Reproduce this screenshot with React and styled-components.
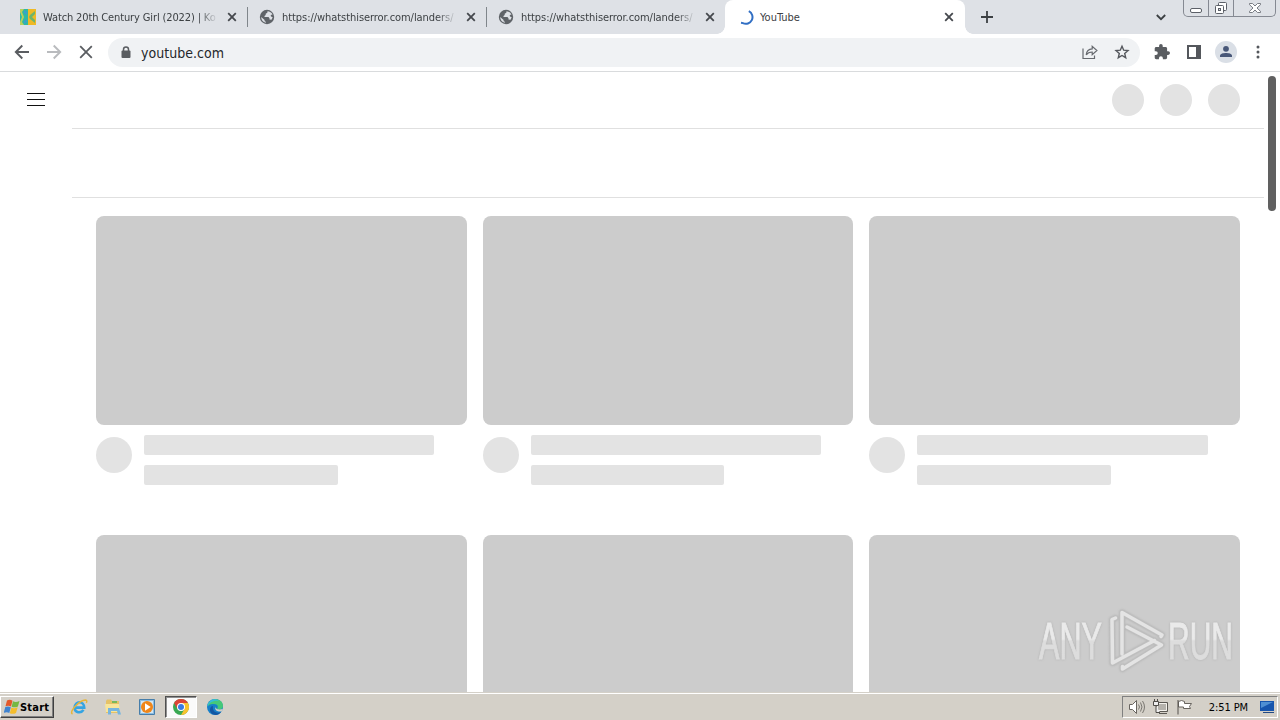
import React from "react"
import styled, { createGlobalStyle } from "styled-components"

const GlobalStyle = createGlobalStyle`
* { box-sizing: border-box; }
body {
    margin: 0;
    overflow: hidden;
    background: white;
}
svg { display: block; flex: none; }
`

const tabs = [
    { title: "Watch 20th Century Girl (2022) | Ko", icon: "site", width: 248, pad: 20, spacing: -0.13 },
    { title: "https://whatsthiserror.com/landers/", icon: "globe", width: 239, pad: 11, spacing: -0.06 },
    { title: "https://whatsthiserror.com/landers/", icon: "globe", width: 238, pad: 11, spacing: -0.06 },
]

function SiteIcon() {
    return (
        <svg width="16" height="16" viewBox="0 0 16 16">
            <path fill="#2eb8a4" d="M0 0h8v16H0z" />
            <path fill="#efb925" d="M8 0h8v16H8z" />
            <path fill="#b9cf5a" d="M0 0h4L2 3l2 5-2 5 2 3H0v-3l2-5-2-5z" />
            <path fill="#6eb56b" d="M15 2v3l-3 3 3 3v3l-5-4-1-2 1-2z" />
            <path fill="#3c9fcb" d="M4 1l3 2v3L4 4zM4 15l3-2v-3l-3 2z" />
        </svg>
    )
}

function GlobeIcon() {
    return (
        <svg width="16" height="16" viewBox="0 0 16 16">
            <circle cx="8" cy="8" r="7.2" fill="#5f6368" />
            <path fill="#dee1e6" d="M8.5 2.2l-.2 1.5-1.6 1v1.4L5.5 7v1h4l1 1.2v1.3l2 .2 1.2-2.4-1.7-.7-.3-1.5 1.8-.7a6 6 0 0 0-5-3.2zM2.2 8l3.4 3v1.2l1.3.5v1.1A6 6 0 0 1 2.2 8z" />
        </svg>
    )
}

function CloseIcon() {
    return (
        <svg width="10" height="10" viewBox="0 0 10 10">
            <path d="M1.2 1.2l7.6 7.6M8.8 1.2L1.2 8.8" stroke="#45484d" strokeWidth="1.8" />
        </svg>
    )
}

function Tab({ tab }) {
    return (
        <TabDiv $width={tab.width} $pad={tab.pad}>
            {tab.icon === "site" ? <SiteIcon /> : <GlobeIcon />}
            <TabTitle $spacing={tab.spacing}>{tab.title}</TabTitle>
            <CloseIcon />
        </TabDiv>
    )
}

function TabStrip() {
    return (
        <StripDiv>
            {tabs.map((tab, i) => <Tab key={i} tab={tab} />)}
            <ActiveTab>
                <svg width="16" height="16" viewBox="0 0 16 16">
                    <path d="M9.8 2.2a6 6 0 0 1-5.9 11.9L2 13.8" fill="none" stroke="#316fc4" strokeWidth="2" />
                </svg>
                <ActiveTitle>YouTube</ActiveTitle>
                <CloseIcon />
            </ActiveTab>
            <NewTab>
                <svg width="12" height="12" viewBox="0 0 12 12">
                    <path d="M6 0v12M0 6h12" stroke="#3c4043" strokeWidth="1.8" />
                </svg>
            </NewTab>
            <svg width="10" height="7" viewBox="0 0 10 7">
                <path d="M.8 1l4.2 4.2L9.2 1" fill="none" stroke="#3c4043" strokeWidth="1.8" />
            </svg>
            <WindowButtons>
                <WindowButton $width={25}>
                    <svg width="12" height="16" viewBox="0 0 12 16">
                        <rect x=".5" y="8.5" width="11" height="4" rx="1.5" fill="#fff" stroke="#5c6068" />
                    </svg>
                </WindowButton>
                <WindowButton $width={25}>
                    <svg width="14" height="16" viewBox="0 0 14 16">
                        <rect x="4.5" y="2.5" width="8" height="8" rx="1" fill="#fff" stroke="#5c6068" />
                        <rect x="1.5" y="5.5" width="8" height="8" rx="1" fill="#fff" stroke="#5c6068" />
                        <rect x="4.5" y="8.5" width="2" height="2" fill="#dee1e6" stroke="#5c6068" />
                    </svg>
                </WindowButton>
                <WindowButton $width={41}>
                    <svg width="12" height="16" viewBox="0 0 12 16">
                        <path d="M.5 3.5h3L6 6l2.5-2.5h3v1.2L8 8l3.5 3.3v1.2h-3L6 10l-2.5 2.5h-3v-1.2L4 8 .5 4.7z" fill="#fff" stroke="#6b6f77" strokeWidth=".9" />
                    </svg>
                </WindowButton>
            </WindowButtons>
        </StripDiv>
    )
}

function Toolbar() {
    return (
        <ToolbarDiv>
            <NavIcons>
                <svg width="16" height="16" viewBox="0 0 16 16">
                    <path d="M15 8H2M8.3 1.5L1.8 8l6.5 6.5" fill="none" stroke="#5a5d61" strokeWidth="1.9" />
                </svg>
                <svg width="16" height="16" viewBox="0 0 16 16">
                    <path d="M1 8h13M7.7 1.5L14.2 8l-6.5 6.5" fill="none" stroke="#b9bbbe" strokeWidth="1.9" />
                </svg>
                <svg width="16" height="16" viewBox="0 0 16 16">
                    <path d="M2.2 2.2l11.6 11.6M13.8 2.2L2.2 13.8" stroke="#5a5d61" strokeWidth="1.8" />
                </svg>
            </NavIcons>
            <AddressBar>
                <svg width="10" height="13" viewBox="0 0 10 13">
                    <path d="M2.5 5V3.4a2.5 2.5 0 0 1 5 0V5" fill="none" stroke="#5a5d61" strokeWidth="1.5" />
                    <rect x=".5" y="4.5" width="9" height="7.5" rx="1" fill="#5a5d61" />
                </svg>
                <Url>youtube.com</Url>
                <svg width="16" height="16" viewBox="0 0 16 16">
                    <path d="M1 4.5v10h11.5v-3M4.2 10.8c.4-3.7 2.3-5.7 6-5.9V2.4l4.7 4.1-4.7 4.1V8c-2.7 0-4.6.8-6 2.8z" fill="none" stroke="#66696e" strokeWidth="1.2" />
                </svg>
                <svg width="16" height="16" viewBox="0 0 16 16">
                    <path d="M8 2.2l1.7 4 4.3.4-3.3 2.9 1 4.2L8 11.5l-3.7 2.2 1-4.2L2 6.6l4.3-.4z" fill="none" stroke="#54575c" strokeWidth="1.4" />
                </svg>
            </AddressBar>
            <ToolIcons>
                <svg width="16" height="16" viewBox="1 1 22 22">
                    <path fill="#5a5d61" d="M20.5 11H19V7c0-1.1-.9-2-2-2h-4V3.5a2.5 2.5 0 0 0-5 0V5H4c-1.1 0-2 .9-2 2v3.8h1.5a2.7 2.7 0 0 1 0 5.4H2V20c0 1.1.9 2 2 2h3.8v-1.5a2.7 2.7 0 0 1 5.4 0V22H17c1.1 0 2-.9 2-2v-4h1.5a2.5 2.5 0 0 0 0-5z" />
                </svg>
                <svg width="16" height="16" viewBox="0 0 16 16">
                    <path fill="#54575c" d="M1 1h14v14H1z" />
                    <path fill="#fff" d="M3 3h7v10H3z" />
                </svg>
                <Avatar>
                    <svg width="14" height="14" viewBox="0 0 14 14">
                        <circle cx="7" cy="3.8" r="2.9" fill="#485778" />
                        <path d="M1 12v-1.2C1 8.7 4.5 8 7 8s6 .7 6 2.8V12z" fill="#485778" />
                    </svg>
                </Avatar>
                <svg width="4" height="14" viewBox="0 0 4 14">
                    <g fill="#54575c">
                        <circle cx="2" cy="2" r="1.5" />
                        <circle cx="2" cy="7" r="1.5" />
                        <circle cx="2" cy="12" r="1.5" />
                    </g>
                </svg>
            </ToolIcons>
        </ToolbarDiv>
    )
}

function VideoCard() {
    return (
        <div>
            <Thumbnail />
            <Details>
                <Channel />
                <Lines>
                    <Line $width="78.3%" />
                    <Line $width="52.23%" />
                </Lines>
            </Details>
        </div>
    )
}

function Watermark() {
    return (
        <WatermarkDiv>
            <svg width="206" height="70" viewBox="1036 606 206 70">
                <defs>
                    <linearGradient id="fade" gradientUnits="userSpaceOnUse" x1="0" x2="0" y1="622" y2="660">
                        <stop offset=".45" stopColor="#eaeaea" />
                        <stop offset=".5" stopColor="#dddddd" />
                    </linearGradient>
                </defs>
                <g fill="url(#fade)" stroke="url(#fade)" strokeWidth="1" fontFamily="Liberation Sans Narrow, Liberation Sans, sans-serif" fontSize="51">
                    <text x="1039" y="659" textLength="63" lengthAdjust="spacingAndGlyphs">ANY</text>
                    <text x="1168" y="659" textLength="65" lengthAdjust="spacingAndGlyphs">RUN</text>
                </g>
                <g fill="none" strokeLinecap="round" strokeLinejoin="round">
                    <path stroke="#bfbfbf" strokeWidth="5.5" d="M1122 654v-41.500l40 22.500-1 1.500M1127 627l34.500 18-39 24v-2.500M1115.500 618l-3.500 1.500.5 43.500 42-22.500" />
                    <path stroke="#e4e4e4" strokeWidth="3.5" d="M1122 654v-41.500l40 22.500-1 1.500M1127 627l34.500 18-39 24v-2.500M1115.500 618l-3.500 1.500.5 43.500 42-22.500" />
                </g>
            </svg>
        </WatermarkDiv>
    )
}

function YouTubePage() {
    return (
        <PageDiv>
            <MenuColumn>
                <svg width="18" height="14" viewBox="0 0 18 14">
                    <path d="M0 .5h18M0 6.5h18M0 12.5h18" stroke="#111" />
                </svg>
            </MenuColumn>
            <Content>
                <Masthead>
                    <Circle />
                    <Circle />
                    <Circle />
                </Masthead>
                <ChipBar />
                <VideoGrid>
                    {[1, 2, 3, 4, 5, 6].map(n => <VideoCard key={n} />)}
                </VideoGrid>
            </Content>
            <ScrollTrack>
                <ScrollThumb />
            </ScrollTrack>
            <Watermark />
        </PageDiv>
    )
}

function Taskbar() {
    return (
        <TaskbarDiv>
            <StartButton>
                <svg width="16" height="16" viewBox="0 0 16 16">
                    <path fill="#e3592b" d="M3 1.5c2-1 3.800-.8 5.500.3L7 7.500C5 6.500 3.500 6.500 1.500 7.300z" />
                    <path fill="#75b843" d="M9 2.300c2 1 4 .8 6.500-.3l-1.600 5.500c-2 1-4.100 1.200-6.300.2z" />
                    <path fill="#3f83d0" d="M1.300 8c2-.9 3.700-.8 5.500.2L5.300 14c-1.500-1-3.300-1.100-5.600-.2z" />
                    <path fill="#f4bd2c" d="M7.400 8.500c2 1 4 .8 6.300-.3L12 14c-2 1-4 1.200-6.200.2z" />
                </svg>
                Start
            </StartButton>
            <QuickIcon>
                <svg width="18" height="18" viewBox="0 0 18 18">
                    <path d="M4.8 9.600h9.400C14 2.500 5 2.500 4.600 9.600c0 5.500 6.500 6 8.900 2.300" fill="none" stroke="#35a4e2" strokeWidth="2.6" />
                    <path d="M2.500 16C-1.500 14 9 2.500 15.500 2c1.800 0 1.500 1.600.8 2.900" fill="none" stroke="#e7b538" strokeWidth="1.4" />
                </svg>
            </QuickIcon>
            <QuickIcon>
                <svg width="18" height="18" viewBox="0 0 18 18">
                    <path fill="#e5c267" d="M2 3l1-1.500h4l1 1.500h7v12H2z" />
                    <path fill="#79b95b" d="M8 3h5v2H8z" />
                    <path fill="#f8e59a" d="M1 6h14l1 8H2z" />
                    <path fill="#77b5df" d="M4 10h11l2 6.500h-3L13 13H7v3.500H4z" />
                </svg>
            </QuickIcon>
            <QuickIcon>
                <svg width="18" height="18" viewBox="0 0 18 18">
                    <path fill="#8bbde2" stroke="#477eaa" d="M1.500 1.500h15v15h-15z" />
                    <path fill="#d5e7f2" d="M3 3h12v12H3z" />
                    <circle cx="9" cy="9" r="6" fill="#ef8619" />
                    <path fill="#fff" d="M7 5.300L12.700 9 7 12.700z" />
                </svg>
            </QuickIcon>
            <QuickIcon $pressed>
                <svg width="16" height="16" viewBox="0 0 16 16">
                    <circle cx="8" cy="8" r="8" fill="#39a852" />
                    <path fill="#dc4437" d="M1.070 4A8 8 0 0 1 14.930 4H8v4l-3.500 2z" />
                    <path fill="#f9c22d" d="M14.930 4A8 8 0 0 1 8 16l3.500-6L8 4z" />
                    <circle cx="8" cy="8" r="4" fill="#fff" />
                    <circle cx="8" cy="8" r="3" fill="#397be4" />
                </svg>
            </QuickIcon>
            <QuickIcon>
                <svg width="16" height="16" viewBox="0 0 16 16">
                    <circle cx="8" cy="8" r="8" fill="#167fc9" />
                    <path fill="#45c879" d="M1 5C4-2 16-1 16 7c0 3-3 4-6 3 2-3 0-5-3-5-2 0-4 0-6 2z" />
                    <path fill="#33bddc" d="M.5 6C3-.5 9-1 12 2 7 1 2 3 .5 8z" />
                    <path fill="#1356a2" d="M6 7c-1 5 3 8 8 6-3 5-11 3-11-2 0-2 1-4 3-4z" />
                    <path fill="#d4d0c8" d="M9 7c-1.500 2 1 4.500 7 3l-1.500 2.500c-4 .5-8-1.500-5.500-5.500z" />
                </svg>
            </QuickIcon>
            <Tray>
                <svg width="18" height="16" viewBox="0 0 18 16">
                    <path d="M1.500 5.500h3l4-4v13l-4-4h-3z" fill="#fff" stroke="#68645f" />
                    <path d="M10.500 5.500q2 2.500 0 5M12.500 3.500q3 4.500 0 9M14.500 2q4 6 0 12" fill="none" stroke="#7a7771" />
                </svg>
                <svg width="18" height="16" viewBox="0 0 18 16">
                    <path d="M4.500 3.500h11v9h-11zM7 14.500h8" fill="#b5b2ac" stroke="#5b5853" />
                    <path d="M5.500 4.500h9v7h-9z" fill="none" stroke="#f4f2ed" />
                    <path d="M1.500 2.500h5v4h-5zM2.500 0v2M5.500 0v2M4 6.500v7h4" fill="#eee" stroke="#4f4c48" />
                </svg>
                <svg width="18" height="16" viewBox="0 0 18 16">
                    <path d="M2.500 2.500q3-2 6 0v2h7l-2 3 1 2h-7v-1.500h-5z" fill="#fff" stroke="#68645f" />
                    <path d="M2 1v14.500" stroke="#55514c" />
                </svg>
                <Clock>2:51 PM</Clock>
                <svg width="16" height="16" viewBox="0 0 16 16">
                    <path fill="#1755ad" d="M1 2h14v10H1z" />
                    <path fill="#4f8fd3" d="M2 3h12L2 9z" />
                    <path fill="#224983" d="M4 13h11v1H4z" />
                </svg>
            </Tray>
        </TaskbarDiv>
    )
}

function App() {
    return (
        <ScreenDiv>
            <GlobalStyle />
            <TabStrip />
            <Toolbar />
            <YouTubePage />
            <Taskbar />
        </ScreenDiv>
    )
}
export default App

const ScreenDiv = styled.div`
width: 1280px;
height: 720px;
display: flex;
flex-direction: column;
overflow: hidden;
font-family: "DejaVu Sans Condensed", "DejaVu Sans", sans-serif;
font-stretch: condensed;
`
const StripDiv = styled.div`
height: 34px;
flex: none;
display: flex;
align-items: center;
background: #dee1e6;
`
const TabDiv = styled.div`
width: ${props => props.$width}px;
height: 34px;
display: flex;
align-items: center;
padding: 0 11px 0 ${props => props.$pad}px;
background: linear-gradient(#80868b, #80868b) right 0 center / 1px 20px no-repeat;
&:nth-child(3) {
    background: none;
    padding-right: 10px;
}
`
const TabTitle = styled.span`
flex: 1;
margin: 1px 9px 0 7px;
white-space: nowrap;
font-size: 11px;
line-height: 16px;
letter-spacing: ${props => props.$spacing}px;
color: #3c4043;
mask-image: linear-gradient(to left, transparent, black 20px);
`
const ActiveTab = styled.div`
position: relative;
width: 240px;
height: 34px;
display: flex;
align-items: center;
padding: 0 11px 0 14px;
border-radius: 8px 8px 0 0;
background: white;
&::before, &::after {
    content: "";
    position: absolute;
    bottom: 0;
    left: -8px;
    width: 8px;
    height: 8px;
    background: radial-gradient(circle at 0 0, transparent 7.5px, white 8px);
}
&::after {
    left: 100%;
    background: radial-gradient(circle at 100% 0, transparent 7.5px, white 8px);
}
`
const ActiveTitle = styled.span`
flex: 1;
margin: 1px 0 0 5px;
font-size: 11px;
line-height: 16px;
color: #3c4043;
`
const NewTab = styled.div`
flex: 1;
padding-left: 16px;
`
const WindowButtons = styled.div`
display: flex;
align-self: flex-start;
height: 17px;
margin: 0 4px 0 17px;
border: 1px solid #858992;
border-top: 0;
border-radius: 0 0 5px 5px;
`
const WindowButton = styled.div`
width: ${props => props.$width}px;
display: flex;
justify-content: center;
border-right: 1px solid #858992;
&:last-child { border-right: 0; }
`
const ToolbarDiv = styled.div`
height: 38px;
flex: none;
display: flex;
align-items: center;
border-bottom: 1px solid #d9dbdd;
background: white;
`
const NavIcons = styled.div`
display: flex;
gap: 16px;
padding: 0 0 2px 14px;
width: 108px;
`
const AddressBar = styled.div`
width: 1032px;
height: 29px;
display: flex;
align-items: center;
gap: 16px;
padding: 0 10px 1px 13px;
border-radius: 15px;
background: #f0f2f4;
`
const Url = styled.span`
flex: 1;
margin: 1px 0 0 -6px;
font-size: 14px;
line-height: 20px;
letter-spacing: 0.03px;
color: #24272b;
`
const ToolIcons = styled.div`
display: flex;
align-items: center;
padding: 0 0 2px 14px;
gap: 16px;
`
const Avatar = styled.div`
width: 22px;
height: 22px;
margin: 0 3px 0 -3px;
display: flex;
align-items: center;
justify-content: center;
border-radius: 50%;
background: #dadfe6;
`
const PageDiv = styled.div`
position: relative;
height: 620px;
flex: none;
display: flex;
overflow: hidden;
`
const MenuColumn = styled.div`
width: 72px;
padding: 21px 27px;
`
const Content = styled.div`
width: 1192px;
`
const Masthead = styled.div`
height: 57px;
display: flex;
justify-content: flex-end;
gap: 16px;
padding: 12px 24px;
border-bottom: 1px solid #e0e0e0;
`
const Circle = styled.div`
width: 32px;
height: 32px;
border-radius: 50%;
background: #e3e3e3;
`
const ChipBar = styled.div`
height: 69px;
border-bottom: 1px solid #e0e0e0;
`
const VideoGrid = styled.div`
display: grid;
grid-template-columns: repeat(3, 1fr);
grid-auto-rows: 319px;
column-gap: 16px;
padding: 18px 24px 0;
`
const Thumbnail = styled.div`
height: 209px;
border-radius: 8px;
background: #cccccc;
`
const Details = styled.div`
display: flex;
padding-top: 10px;
`
const Channel = styled.div`
width: 36px;
height: 36px;
margin: 2px 12px 0 0;
border-radius: 50%;
background: #e3e3e3;
`
const Lines = styled.div`
flex: 1;
display: flex;
flex-direction: column;
gap: 10px;
margin-right: -48px;
`
const Line = styled.div`
width: ${props => props.$width};
height: 20px;
border-radius: 2px;
background: #e3e3e3;
`
const ScrollTrack = styled.div`
padding: 4px;
`
const ScrollThumb = styled.div`
width: 8px;
height: 135px;
border-radius: 4px;
background: #606060;
`
const WatermarkDiv = styled.div`
position: absolute;
left: 1036px;
top: 534px;
filter: drop-shadow(0 0 1px #b0b0b0);
`
const TaskbarDiv = styled.div`
height: 28px;
flex: none;
display: flex;
align-items: center;
padding: 1px 2px 0 0;
border-top: 1px solid #d4d0c8;
box-shadow: inset 0 1px white;
background: #d4d0c8;
`
const StartButton = styled.div`
width: 54px;
height: 22px;
margin-right: 9px;
display: flex;
align-items: center;
padding-left: 3px;
font-size: 11px;
font-weight: bold;
letter-spacing: 0.2px;
border: 1px solid;
border-color: white #404040 #404040 white;
box-shadow: inset -1px -1px #808080;
`
const QuickIcon = styled.div`
width: 32px;
height: 22px;
margin-right: 2px;
display: flex;
align-items: center;
justify-content: center;
border: 1px solid transparent;
${props => props.$pressed && `
background: #fafafa;
border-color: #505050 white white #505050;
box-shadow: inset 1px 1px #909090;
`}
`
const Tray = styled.div`
width: 156px;
height: 22px;
margin-left: auto;
display: flex;
align-items: center;
padding: 0 2px 0 5px;
gap: 6px;
border: 1px solid;
border-color: #808080 white white #808080;
`
const Clock = styled.span`
flex: 1;
text-align: right;
padding-right: 5px;
white-space: nowrap;
font-size: 11px;
letter-spacing: -0.1px;
color: black;
`
